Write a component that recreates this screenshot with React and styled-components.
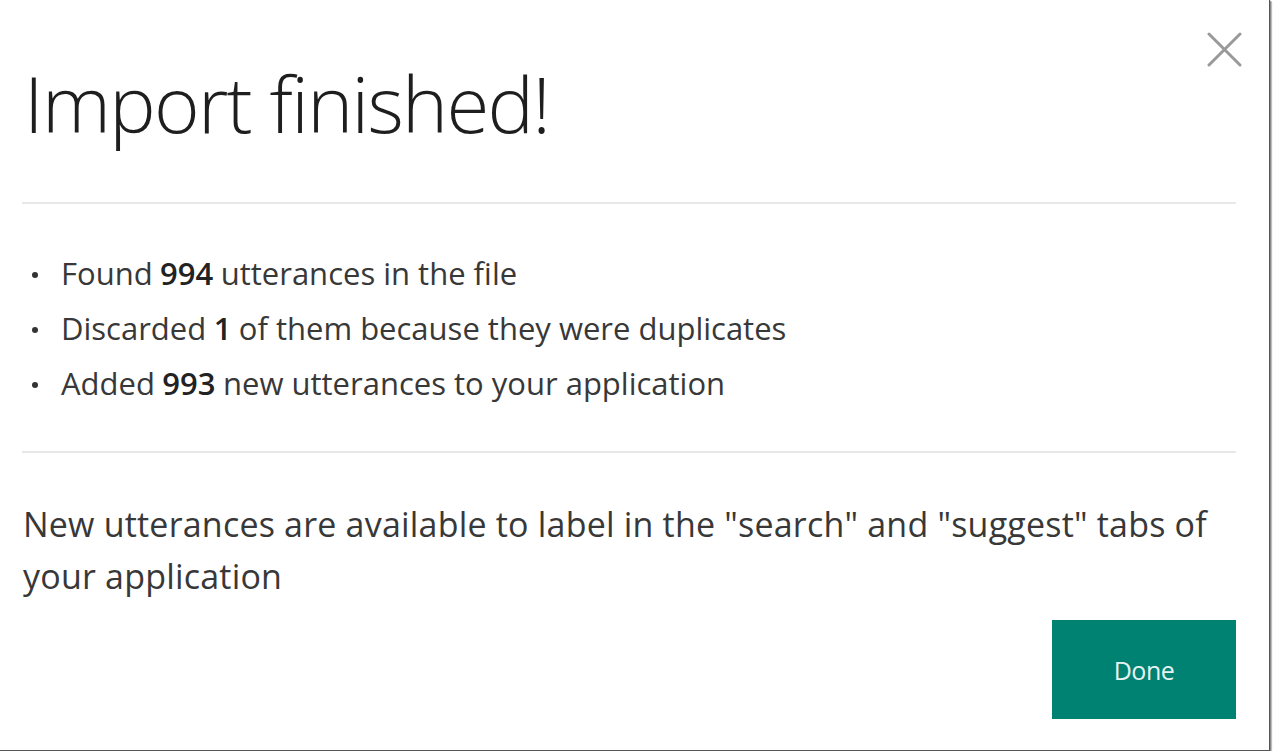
import styled, { createGlobalStyle } from "styled-components";

const GlobalStyle = createGlobalStyle`
  body {
    margin: 0;
    background: #ffffff;
    font-family: "Open Sans", "Noto Sans", sans-serif;
  }
`;

// screenshot frame: dark edge + soft shadow on right and bottom only
const Frame = styled.div`
  box-sizing: border-box;
  width: 1270px;
  height: 751px;
  background: #ffffff;
  border-right: 1px solid #555555;
  border-bottom: 1px solid #555555;
  box-shadow: 1px 1px 1px #8a8a8a, 2px 2px 1px #c8c8c8;
  display: flex;
  flex-direction: column;
  padding: 32px 33px 31px 22px;
`;

const Header = styled.div`
  display: flex;
  justify-content: space-between;
  align-items: flex-start;
`;

const Title = styled.h1`
  margin: 32px 0 0 2px;
  font-size: 78px;
  line-height: 78px;
  font-weight: 300;
  color: #1e1e1e;
  letter-spacing: -1.7px;
`;

const CloseButton = styled.button`
  border: none;
  background: none;
  padding: 0;
  margin-right: -6px;
  width: 35px;
  height: 35px;
  cursor: pointer;
  svg {
    display: block;
  }
`;

const Divider = styled.hr`
  border: none;
  height: 2px;
  background: #e8e8e8;
  margin: ${(p) => p.$top}px 0 0;
`;

const List = styled.ul`
  list-style: none;
  margin: 42px 0 0;
  padding: 0;
`;

const Item = styled.li`
  display: flex;
  align-items: center;
  font-size: 31px;
  line-height: 55px;
  color: #383838;

  &::before {
    content: "";
    width: 6px;
    height: 6px;
    border-radius: 50%;
    background: #333333;
    margin: 2px 23px 0 10px;
    flex: none;
  }

  b {
    font-weight: 600;
    color: #222222;
    margin: 0 0.24em;
  }
`;

const Note = styled.p`
  margin: 45px 0 0 1px;
  font-size: 34px;
  line-height: 52px;
  color: #383838;
  letter-spacing: 0.2px;
`;

const Footer = styled.div`
  display: flex;
  justify-content: flex-end;
  margin-top: auto;
`;

const DoneButton = styled.button`
  width: 184px;
  height: 99px;
  border: none;
  background: #008272;
  color: #e6f3f1;
  font-family: "Open Sans", "Noto Sans", sans-serif;
  font-size: 25px;
  letter-spacing: -0.5px;
  cursor: pointer;
`;

const items = [
  ["Found", "994", "utterances in the file"],
  ["Discarded", "1", "of them because they were duplicates"],
  ["Added", "993", "new utterances to your application"],
];

export default function App() {
  return (
    <>
      <GlobalStyle />
      <Frame>
        <Header>
          <Title>Import finished!</Title>
          <CloseButton aria-label="Close">
            <svg width="35" height="35" viewBox="0 0 35 35">
              <path
                d="M2 2 L33 33 M33 2 L2 33"
                stroke="#999999"
                strokeWidth="3"
                strokeLinecap="round"
              />
            </svg>
          </CloseButton>
        </Header>
        <Divider $top={60} />
        <List>
          {items.map(([a, n, b]) => (
            <Item key={a}>
              {a}
              <b>{n}</b>
              {b}
            </Item>
          ))}
        </List>
        <Divider $top={40} />
        <Note>
          New utterances are available to label in the "search" and "suggest"
          tabs of your application
        </Note>
        <Footer>
          <DoneButton>Done</DoneButton>
        </Footer>
      </Frame>
    </>
  );
}
